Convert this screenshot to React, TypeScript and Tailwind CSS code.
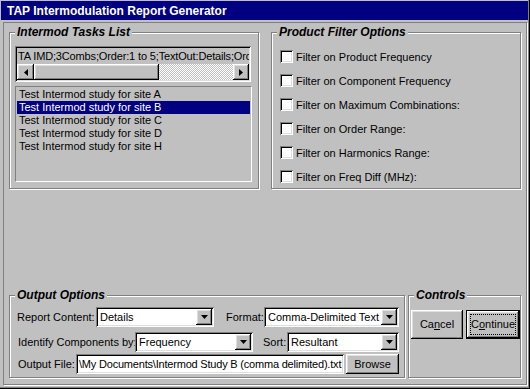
import React from 'react'

const raised =
  'shadow-[inset_-1px_-1px_#000,inset_1px_1px_#fff,inset_-2px_-2px_#808080,inset_2px_2px_#dfdfdf]'
const sunken =
  'shadow-[inset_1px_1px_#808080,inset_-1px_-1px_#fff,inset_2px_2px_#000,inset_-2px_-2px_#dfdfdf]'

function Group({ label, className, children }: { label: string; className: string; children?: React.ReactNode }) {
  return (
    <div className={`relative border border-[#808080] shadow-[1px_1px_0_#fff,inset_1px_1px_0_#fff] ${className}`}>
      <span className="absolute top-[-8px] left-[5px] bg-[#c0c0c0] px-[2px] text-[12px] leading-[14px] font-bold italic">
        {label}
      </span>
      {children}
    </div>
  )
}

function Arrow({ dir }: { dir: 'down' | 'left' | 'right' }) {
  const pts = dir === 'down' ? '0,0 7,0 3.5,4' : dir === 'left' ? '4,0 4,7 0,3.5' : '0,0 0,7 4,3.5'
  const w = dir === 'down' ? 7 : 4
  const h = dir === 'down' ? 4 : 7
  return (
    <svg width={w} height={h} viewBox={`0 0 ${w} ${h}`}>
      <polygon points={pts} fill="#000" />
    </svg>
  )
}

function Combo({ value, className }: { value: string; className: string }) {
  return (
    <div className={`flex h-[20px] shrink-0 items-center bg-white p-[2px] ${sunken} ${className}`}>
      <span className="flex-1 truncate pl-[2px]">{value}</span>
      <div className={`flex h-[16px] w-[16px] items-center justify-center bg-[#c0c0c0] ${raised}`}>
        <Arrow dir="down" />
      </div>
    </div>
  )
}

function Check({ label }: { label: string }) {
  return (
    <div className="flex h-[24px] items-start">
      <div className={`h-[13px] w-[13px] shrink-0 bg-white ${sunken}`} />
      <span className="ml-[3px] leading-[14px]">{label}</span>
    </div>
  )
}

const tasks = [
  'Test Intermod study for site A',
  'Test Intermod study for site B',
  'Test Intermod study for site C',
  'Test Intermod study for site D',
  'Test Intermod study for site H',
]

export default function App() {
  return (
    <div className="flex h-[389px] w-[530px] flex-col overflow-hidden whitespace-nowrap bg-[#c0c0c0] pt-[1px] pl-[1px] pr-[2px] pb-[2px] font-['Liberation_Sans',Arial,sans-serif] text-[11px] text-black shadow-[inset_-1px_-1px_#000,inset_-2px_-2px_#808080]">
      <div className="flex h-[19px] shrink-0 items-center bg-[#000080] pl-[6px] text-[12px] font-bold text-white">
        TAP Intermodulation Report Generator
      </div>
      <div className="mt-[2px] mr-[1px] mb-[2px] ml-[2px] flex flex-1 flex-col border border-[#808080] px-[5px] pt-[9px] pb-[6px] shadow-[1px_1px_0_#fff]">
        <div className="flex justify-between">
          <Group label="Intermod Tasks List" className="h-[157px] w-[250px] px-[5px] pt-[13px]">
            <div className={`h-[36px] w-[236px] bg-[#c0c0c0] p-[2px] ${sunken}`}>
              <div className="h-[16px] overflow-hidden pl-[1px] leading-[16px] tracking-[-0.15px]">
                TA IMD;3Combs;Order:1 to 5;TextOut:Details;Order:1 to 5
              </div>
              <div className="flex h-[16px]">
                <div className={`flex h-[16px] w-[17px] items-center justify-center bg-[#c0c0c0] ${raised}`}>
                  <Arrow dir="left" />
                </div>
                <div className={`h-[16px] w-[125px] bg-[#c0c0c0] ${raised}`} />
                <div className="h-[16px] flex-1 bg-[repeating-conic-gradient(#fff_0_25%,#c0c0c0_0_50%)] bg-[length:2px_2px]" />
                <div className={`flex h-[16px] w-[16px] items-center justify-center bg-[#c0c0c0] ${raised}`}>
                  <Arrow dir="right" />
                </div>
              </div>
            </div>
            <div className="mt-[4px] h-[96px] w-[237px] border border-[#808080] border-r-white border-b-white p-[1px]">
              {tasks.map((t, i) => (
                <div
                  key={t}
                  className={`h-[13px] pl-[2px] leading-[13px] ${i === 1 ? 'bg-[#000080] text-white' : ''}`}
                >
                  {t}
                </div>
              ))}
            </div>
          </Group>
          <Group label="Product Filter Options" className="h-[157px] w-[250px] pl-[8px] pt-[17px]">
            <Check label="Filter on Product Frequency" />
            <Check label="Filter on Component Frequency" />
            <Check label="Filter on Maximum Combinations:" />
            <Check label="Filter on Order Range:" />
            <Check label="Filter on Harmonics Range:" />
            <Check label="Filter on Freq Diff (MHz):" />
          </Group>
        </div>
        <div className="flex-1" />
        <div className="flex gap-[3px]">
          <Group label="Output Options" className="h-[83px] w-[396px] shrink-0 pl-[7px] pt-[11px]">
            <div className="flex items-center">
              <span className="w-[79px]">Report Content:</span>
              <Combo value="Details" className="w-[118px]" />
              <span className="ml-[12px] w-[38px]">Format:</span>
              <Combo value="Comma-Delimited Text" className="w-[135px]" />
            </div>
            <div className="mt-[5px] flex items-center">
              <span className="w-[118px] pl-[1px]">Identify Components by:</span>
              <Combo value="Frequency" className="w-[118px]" />
              <span className="ml-[10px] w-[24px]">Sort:</span>
              <Combo value="Resultant" className="w-[112px]" />
            </div>
            <div className="mt-[2px] flex items-center">
              <span className="w-[59px] pl-[1px]">Output File:</span>
              <div className={`flex h-[20px] w-[268px] shrink-0 items-center overflow-hidden bg-white px-[3px] tracking-[-0.2px] ${sunken}`}>
                \My Documents\Intermod Study B (comma delimited).txt
              </div>
              <button className={`ml-[2px] h-[20px] w-[53px] shrink-0 bg-[#c0c0c0] ${raised}`}>Browse</button>
            </div>
          </Group>
          <Group label="Controls" className="h-[83px] flex-1 pl-[2px] pt-[14px]">
            <div className="flex gap-[3px]">
              <button className={`h-[29px] w-[52px] bg-[#c0c0c0] ${raised}`}>
                Ca<u>n</u>cel
              </button>
              <button className="h-[29px] w-[54px] border border-black bg-[#c0c0c0] p-0">
                <div className={`flex h-full w-full items-center justify-center p-[3px] ${raised}`}>
                  <div className="flex h-full w-full items-center justify-center border border-dotted border-black">
                    C<u>o</u>ntinue
                  </div>
                </div>
              </button>
            </div>
          </Group>
        </div>
      </div>
    </div>
  )
}
